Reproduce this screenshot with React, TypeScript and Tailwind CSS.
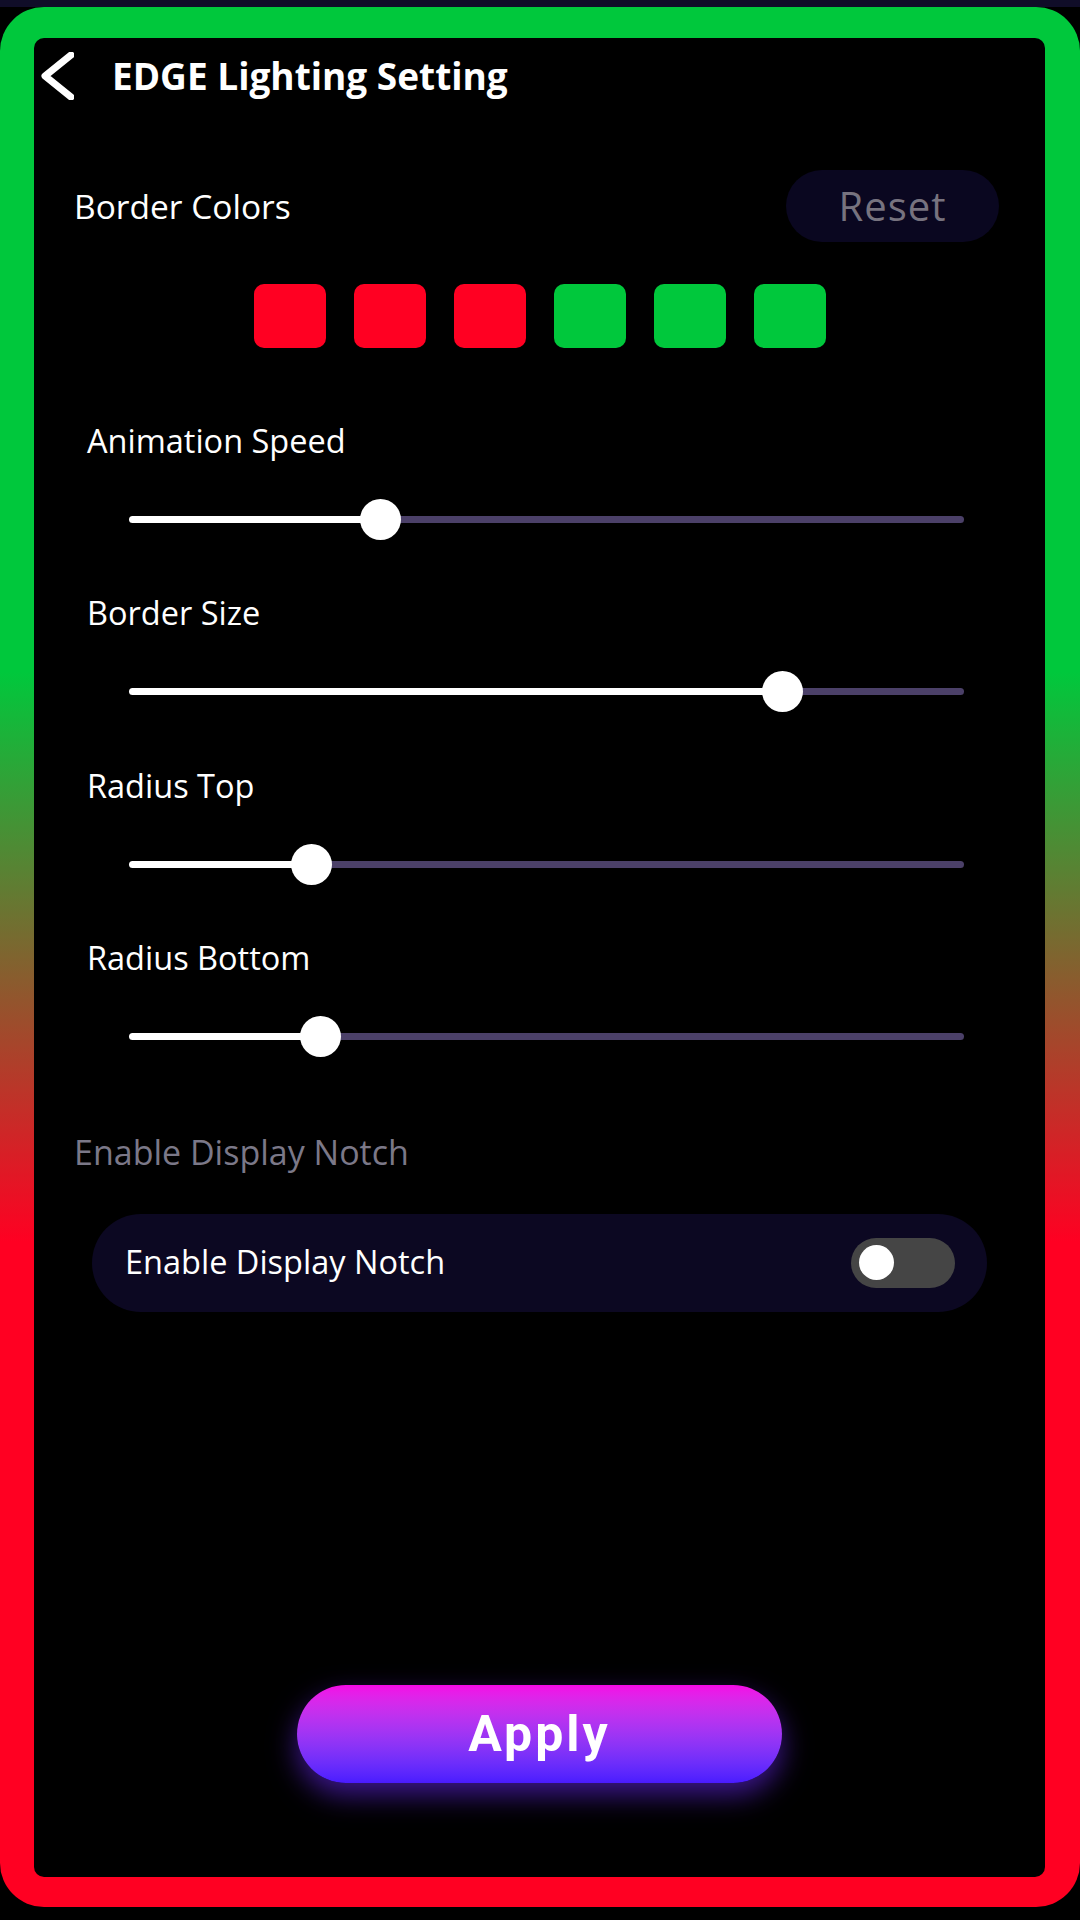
const swatches = ["#ff0022", "#ff0022", "#ff0022", "#00c83c", "#00c83c", "#00c83c"];

const sliders = [
  { label: "Animation Speed", value: 251 },
  { label: "Border Size", value: 653 },
  { label: "Radius Top", value: 182 },
  { label: "Radius Bottom", value: 191 },
];

function Slider({ label, value }: { label: string; value: number }) {
  return (
    <div className="flex flex-col">
      <div className="ml-[53px] flex h-[44px] items-center text-[32.5px] text-white">{label}</div>
      <div className="ml-[95px] mt-[34px] flex h-[44px] w-[835px] items-center">
        <div className="h-[7px] rounded-l-full bg-white" style={{ width: value }} />
        <div className="relative z-10 -mx-[20.5px] h-[41px] w-[41px] shrink-0 rounded-full bg-white" />
        <div className="h-[7px] flex-1 rounded-r-full bg-[#4b4068]" />
      </div>
    </div>
  );
}

export default function App() {
  return (
    <div className="flex h-[1920px] w-[1080px] flex-col bg-black font-['Open_Sans',sans-serif]">
      <div className="h-[7px] bg-[#100d28]" />
      <div className="h-[1900px] rounded-[44px] bg-[linear-gradient(to_bottom,#00c83c_0%,#00c83c_35%,#ff0022_65%,#ff0022_100%)] pb-[30px] pl-[34px] pr-[35px] pt-[31px]">
        <div className="flex h-full flex-col rounded-[10px] bg-black">
          {/* header */}
          <div className="flex h-[75px] items-center">
            <svg className="ml-[6px]" width="34" height="48" viewBox="0 0 34 48" fill="none">
              <polyline points="31,3 5,24 31,45" stroke="white" strokeWidth="7" strokeLinecap="round" strokeLinejoin="round" />
            </svg>
            <h1 className="ml-[38px] text-[37px] font-bold text-white">EDGE Lighting Setting</h1>
          </div>

          {/* border colors */}
          <div className="mt-[57px] flex h-[72px] items-center justify-between pl-[40px] pr-[46px]">
            <span className="text-[33.5px] text-white">Border Colors</span>
            <button className="flex h-[72px] w-[213px] items-center justify-center rounded-full bg-[#0a0720] text-[40px] tracking-[1px] text-[#77737f]">
              Reset
            </button>
          </div>
          <div className="mt-[42px] flex justify-center gap-[28px]">
            {swatches.map((c, i) => (
              <div key={i} className="h-[64px] w-[72px] rounded-[10px]" style={{ backgroundColor: c }} />
            ))}
          </div>

          {/* sliders */}
          <div className="mt-[71px] flex flex-col gap-[50.5px]">
            {sliders.map((s) => (
              <Slider key={s.label} label={s.label} value={s.value} />
            ))}
          </div>

          {/* notch */}
          <div className="ml-[40px] mt-[72px] flex h-[44px] items-center text-[34px] text-[#7b7888]">Enable Display Notch</div>
          <div className="ml-[58px] mt-[39px] flex h-[98px] w-[895px] items-center justify-between rounded-full bg-[#0c0822] pl-[33px] pr-[32px]">
            <span className="text-[32.5px] text-white">Enable Display Notch</span>
            <div className="flex h-[50px] w-[104px] items-center rounded-full bg-[#454545] px-[8px]">
              <div className="h-[35px] w-[35px] rounded-full bg-white" />
            </div>
          </div>

          {/* apply */}
          <div className="mb-[94px] mt-auto flex justify-center">
            <button className="flex h-[98px] w-[485px] items-center justify-center rounded-full bg-linear-to-b from-[#f408e6] to-[#4a1bff] font-['Roboto',sans-serif] text-[50px] font-bold tracking-[3px] text-white shadow-[0_12px_28px_rgba(110,40,255,0.55)]">
              Apply
            </button>
          </div>
        </div>
      </div>
    </div>
  );
}
